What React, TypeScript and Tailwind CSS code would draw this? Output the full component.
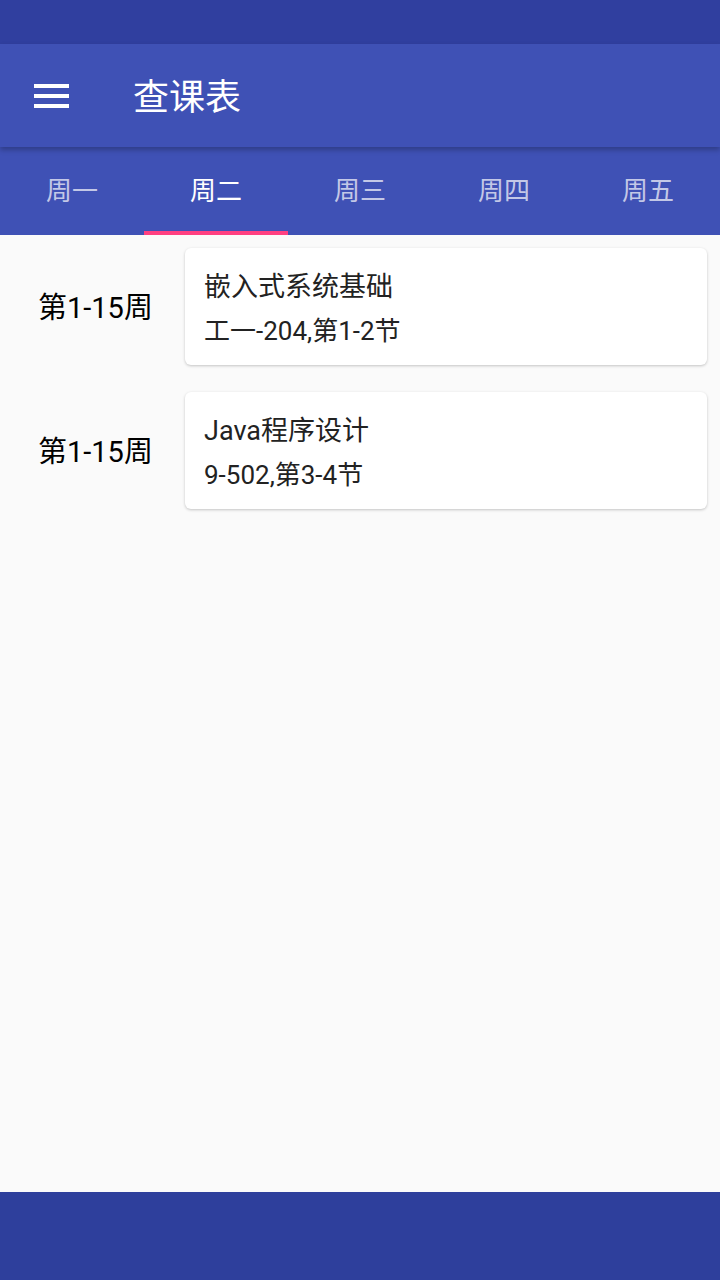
const days = ["周一", "周二", "周三", "周四", "周五"];

const courses = [
  { weeks: "第1-15周", name: "嵌入式系统基础", place: "工一-204,第1-2节" },
  { weeks: "第1-15周", name: "Java程序设计", place: "9-502,第3-4节" },
];

function MenuIcon() {
  return (
    <svg width="36" height="24" viewBox="0 0 36 24" fill="#ffffff">
      <rect x="0" y="0" width="35" height="4" />
      <rect x="0" y="10" width="35" height="4" />
      <rect x="0" y="20" width="35" height="4" />
    </svg>
  );
}

export default function App() {
  const active = 1;

  return (
    <div
      className="w-[720px] h-[1280px] flex flex-col bg-[#fafafa] overflow-hidden"
      style={{ fontFamily: "Roboto, 'Noto Sans CJK SC', sans-serif" }}
    >
      {/* status bar */}
      <div className="h-[44px] bg-[#303f9f] shrink-0" />

      {/* toolbar */}
      <div className="relative z-10 h-[103px] shrink-0 bg-[#3f51b5] flex items-center shadow-[0_3px_5px_rgba(0,0,0,0.25)]">
        <div className="w-[133px] pl-[34px] flex items-center">
          <MenuIcon />
        </div>
        <h1 className="text-white text-[36px] leading-none pt-[4px]">查课表</h1>
      </div>

      {/* tabs */}
      <div className="h-[88px] shrink-0 bg-[#3f51b5] flex">
        {days.map((d, i) => (
          <div key={d} className="flex-1 relative flex items-center justify-center">
            <span
              className={
                i === active
                  ? "text-white text-[26px] leading-none"
                  : "text-white/70 text-[26px] leading-none"
              }
            >
              {d}
            </span>
            {i === active && (
              <div className="absolute left-0 right-0 bottom-0 h-[4px] bg-[#ff4081]" />
            )}
          </div>
        ))}
      </div>

      {/* course list */}
      <div className="flex-1 flex flex-col gap-[27px] pt-[13px] pr-[13px]">
        {courses.map((c, i) => (
          <div key={i} className="flex items-center">
            <div className="w-[185px] pl-[38px] text-[29px] text-black leading-none pt-[3px]">
              {c.weeks}
            </div>
            <div className="flex-1 h-[117px] bg-white rounded-[6px] shadow-[0_1px_3px_rgba(0,0,0,0.22)] pl-[19px] pt-[4px] flex flex-col justify-center gap-[17px]">
              <div className="text-[27px] text-[#222] leading-none">{c.name}</div>
              <div className="text-[26px] text-[#222] leading-none">{c.place}</div>
            </div>
          </div>
        ))}
      </div>

      {/* nav bar */}
      <div className="h-[88px] shrink-0 bg-[#2e3f9c]" />
    </div>
  );
}
